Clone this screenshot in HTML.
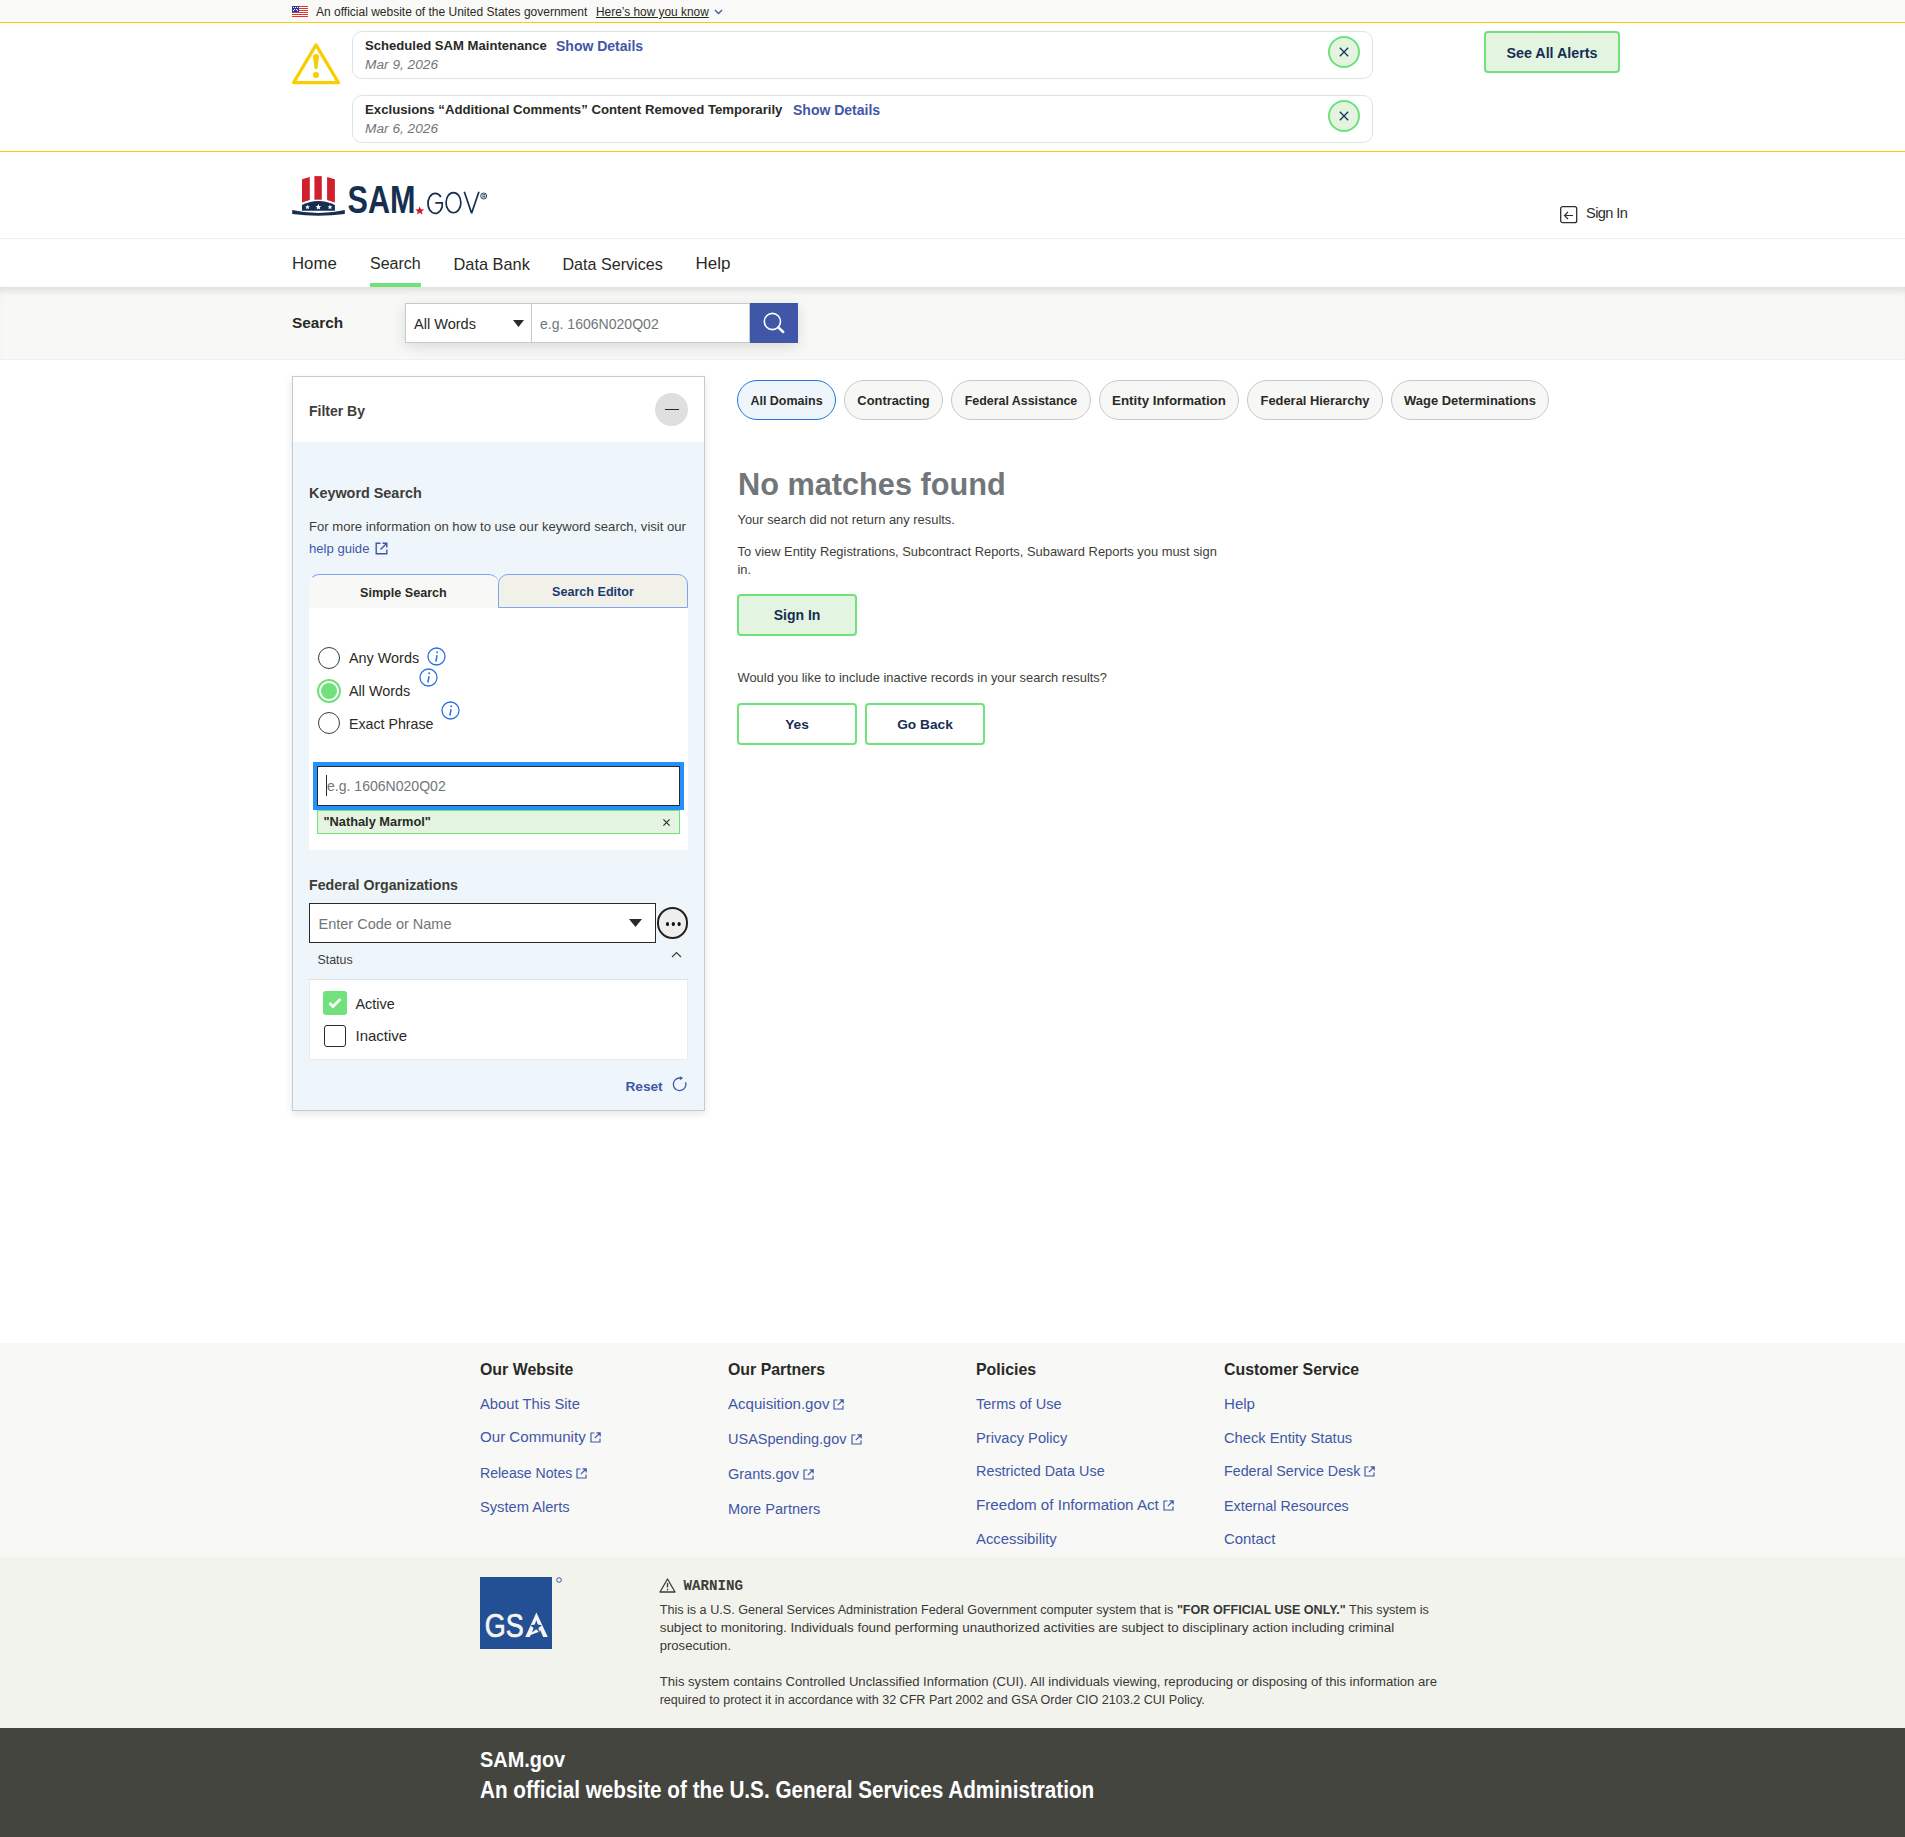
<!DOCTYPE html>
<html><head><meta charset="utf-8">
<style>
*{box-sizing:border-box;margin:0;padding:0}
html,body{width:1905px;height:1837px;overflow:hidden;background:#fff}
body{font-family:"Liberation Sans",sans-serif;color:#2a2a26;position:relative}
.a{position:absolute;white-space:nowrap}
.b{font-weight:700}
</style></head><body>

<!-- gov banner -->
<div class="a" style="left:0;top:0;width:1905px;height:23px;background:#f9f9f7;border-bottom:1px solid #fbcd00"></div>
<svg class="a" style="left:292px;top:6px" width="16" height="11" viewBox="0 0 16 11">
<rect width="16" height="11" fill="#fff"/>
<g fill="#d8382d"><rect y="0" width="16" height="1"/><rect y="2" width="16" height="1"/><rect y="4" width="16" height="1"/><rect y="6" width="16" height="1"/><rect y="8" width="16" height="1"/><rect y="10" width="16" height="1"/></g>
<rect width="7" height="6" fill="#2b3a9e"/>
<g fill="#fff"><rect x="1" y="1" width="1" height="1"/><rect x="3" y="1" width="1" height="1"/><rect x="5" y="1" width="1" height="1"/><rect x="2" y="3" width="1" height="1"/><rect x="4" y="3" width="1" height="1"/><rect x="1" y="4" width="1" height="1"/><rect x="5" y="4" width="1" height="1"/></g>
</svg>
<div class="a" id="t-banner" style="left:316px;top:4px;font-size:12px;line-height:16px;color:#2a2a26">An official website of the United States government</div>
<div class="a" id="t-howknow" style="left:596px;top:4px;font-size:11.9px;line-height:16px;color:#2a2a26;text-decoration:underline">Here’s how you know</div>
<svg class="a" style="left:714px;top:9px" width="9" height="6" viewBox="0 0 9 6"><path d="M1 1 L4.5 4.5 L8 1" fill="none" stroke="#3f57a6" stroke-width="1.3"/></svg>

<!-- alerts -->
<div class="a" style="left:0;top:151px;width:1905px;height:1px;background:#fbcd00"></div>
<svg class="a" style="left:292px;top:41px" width="48" height="44" viewBox="0 0 48 44">
<path d="M24 3.9 L46.4 41.6 L1.6 41.6 Z" fill="none" stroke="#f8ce00" stroke-width="3.2" stroke-linejoin="round"/>
<path d="M21 15.5 Q21 13 24 13 Q27 13 27 15.5 L25.5 27 Q25.3 28.2 24 28.2 Q22.7 28.2 22.5 27 Z" fill="#f8ce00"/>
<circle cx="24" cy="34" r="3.05" fill="#f8ce00"/>
</svg>
<div class="a" style="left:352px;top:31px;width:1021px;height:48px;border:1px solid #dfe1e2;border-radius:10px"></div>
<div class="a b" style="left:365px;top:37px;font-size:13.1px;line-height:18px;color:#2a2a26">Scheduled SAM Maintenance</div>
<div class="a b" style="left:556px;top:37px;font-size:14px;line-height:18px;color:#3f57a6">Show Details</div>
<div class="a" style="left:365px;top:56px;font-size:13.7px;line-height:18px;font-style:italic;color:#71767a">Mar 9, 2026</div>
<div class="a" style="left:1328px;top:36px;width:32px;height:32px;border:2px solid #70e17b;border-radius:50%;background:#e3f5e1"></div>
<svg class="a" style="left:1339px;top:47px" width="10" height="10" viewBox="0 0 10 10"><path d="M0.8 0.8 L9.2 9.2 M9.2 0.8 L0.8 9.2" stroke="#162e51" stroke-width="1.25"/></svg>

<div class="a" style="left:352px;top:95px;width:1021px;height:48px;border:1px solid #dfe1e2;border-radius:10px"></div>
<div class="a b" style="left:365px;top:101px;font-size:13.2px;line-height:18px;color:#2a2a26">Exclusions “Additional Comments” Content Removed Temporarily</div>
<div class="a b" style="left:793px;top:101px;font-size:14px;line-height:18px;color:#3f57a6">Show Details</div>
<div class="a" style="left:365px;top:120px;font-size:13.7px;line-height:18px;font-style:italic;color:#71767a">Mar 6, 2026</div>
<div class="a" style="left:1328px;top:100px;width:32px;height:32px;border:2px solid #70e17b;border-radius:50%;background:#e3f5e1"></div>
<svg class="a" style="left:1339px;top:111px" width="10" height="10" viewBox="0 0 10 10"><path d="M0.8 0.8 L9.2 9.2 M9.2 0.8 L0.8 9.2" stroke="#162e51" stroke-width="1.25"/></svg>

<div class="a b" style="left:1484px;top:31px;width:136px;height:42px;border:2px solid #70e17b;border-radius:4px;background:#e3f5e1;color:#162e51;font-size:14.3px;line-height:38px;padding-top:1px;text-align:center">See All Alerts</div>

<!-- header -->
<svg class="a" style="left:290px;top:174px" width="200" height="44" viewBox="0 0 200 44">
<path d="M12 5.2 L19.8 2.9 L19.8 26 L12 28.6 Z" fill="#d0202e"/>
<path d="M24.4 2.1 L31.8 2.1 L31.8 25.7 L24.4 25.7 Z" fill="#d0202e"/>
<path d="M37.1 2.9 L44.9 5.2 L44.9 28.6 L37.1 26 Z" fill="#d0202e"/>
<path d="M12 30.9 Q28.4 23 44.9 30.9 L44.9 36.7 L12 36.7 Z" fill="#162e51"/>
<g fill="#fff"><path d="M17.5 30.8 l0.68 1.55 1.68 0.15 -1.27 1.1 0.38 1.65 -1.47 -0.88 -1.47 0.88 0.38 -1.65 -1.27 -1.1 1.68 -0.15z"/><path d="M28.4 30.1 l0.82 1.87 2.03 0.18 -1.54 1.33 0.46 2 -1.77 -1.06 -1.77 1.06 0.46 -2 -1.54 -1.33 2.03 -0.18z"/><path d="M40 30.8 l0.68 1.55 1.68 0.15 -1.27 1.1 0.38 1.65 -1.47 -0.88 -1.47 0.88 0.38 -1.65 -1.27 -1.1 1.68 -0.15z"/></g>
<path d="M2.2 36 Q28.5 42.1 54.8 36 L54.8 40 Q28.5 43.5 2.2 40 Z" fill="#162e51"/>
<text x="57.5" y="39" font-family="Liberation Sans" font-weight="700" font-size="38.5" fill="#162e51" textLength="68" lengthAdjust="spacingAndGlyphs">SAM</text>
<path d="M129.7 32.4 l1.32 2.85 3.15 0.22 -2.42 1.98 0.77 3.08 -2.82 -1.76 -2.82 1.76 0.77 -3.08 -2.42 -1.98 3.15 -0.22z" fill="#d0202e"/>
<g fill="none" stroke="#162e51" stroke-width="1.7">
<path d="M150.9 23 A7.3 10 0 1 0 152.2 32.5 L152.2 28.9 L145.3 28.9"/>
<ellipse cx="163.45" cy="28.7" rx="7.4" ry="10.05"/>
<path d="M174.3 17.8 L181.6 39.3 L188.9 17.8" stroke-linejoin="bevel"/>
</g>
<circle cx="193.7" cy="22" r="3" fill="none" stroke="#162e51" stroke-width="0.9"/>
<text x="192.2" y="23.6" font-family="Liberation Sans" font-size="4.5" font-weight="700" fill="#162e51">R</text>
</svg>
<svg class="a" style="left:1560px;top:206px" width="18" height="18" viewBox="0 0 18 18">
<rect x="0.7" y="0.7" width="16" height="16" rx="2" fill="none" stroke="#2e2e2a" stroke-width="1.3"/>
<path d="M13 9.5 L4.5 9.5 M8 6 L4.5 9.5 L8 13" fill="none" stroke="#2e2e2a" stroke-width="1.2"/>
</svg>
<div class="a" style="left:1586px;top:204px;font-size:14.6px;line-height:18px;letter-spacing:-0.6px;color:#2e2e2a">Sign In</div>
<div class="a" style="left:0;top:238px;width:1905px;height:1px;background:#f0f0ec"></div>

<!-- nav -->
<div class="a" style="left:292px;top:254px;font-size:16.8px;line-height:20px;color:#2a2a26">Home</div>
<div class="a" style="left:370px;top:254px;font-size:16px;line-height:20px;color:#2a2a26">Search</div>
<div class="a" style="left:453.5px;top:254px;font-size:16.36px;line-height:20px;color:#2a2a26">Data Bank</div>
<div class="a" style="left:562.5px;top:254px;font-size:16.1px;line-height:20px;color:#2a2a26">Data Services</div>
<div class="a" style="left:695.5px;top:254px;font-size:17px;line-height:20px;color:#2a2a26">Help</div>
<div class="a" style="left:370px;top:283px;width:51px;height:4px;background:#70e17b"></div>

<!-- search band -->
<div class="a" style="left:0;top:287px;width:1905px;height:73px;background:#f8f8f6;box-shadow:inset 0 8px 10px -6px rgba(0,0,0,.14);border-bottom:1px solid #f1f1ea"></div>
<div class="a b" style="left:292px;top:314px;font-size:15.35px;line-height:18px;color:#2a2a26">Search</div>
<div class="a" style="left:405px;top:303px;width:393px;height:40px;box-shadow:0 4px 14px rgba(0,0,0,.12)"></div>
<div class="a" style="left:531px;top:303px;width:219px;height:40px;background:#fff;border:1px solid #c9c9c9;border-left:none"></div>
<div class="a" style="left:405px;top:303px;width:127px;height:40px;background:#fff;border:1px solid #c9c9c9"></div>
<div class="a" style="left:414px;top:315px;font-size:14.55px;line-height:18px;color:#2a2a26">All Words</div>
<svg class="a" style="left:513px;top:320px" width="11" height="8" viewBox="0 0 11 8"><path d="M0 0 L11 0 L5.5 7 Z" fill="#2a2a26"/></svg>
<div class="a" style="left:540px;top:315px;font-size:14.06px;line-height:18px;color:#71767a">e.g. 1606N020Q02</div>
<div class="a" style="left:750px;top:303px;width:48px;height:40px;background:#3f57a6"></div>
<svg class="a" style="left:762px;top:311px" width="24" height="24" viewBox="0 0 24 24"><circle cx="10.4" cy="10.5" r="8.1" fill="none" stroke="#fff" stroke-width="1.6"/><path d="M16.3 16.4 L21.2 21" stroke="#fff" stroke-width="2.5" stroke-linecap="round"/></svg>

<!-- filter panel -->
<div class="a" style="left:292px;top:376px;width:413px;height:735px;border:1px solid #c9c9c9;background:#eff6fb;box-shadow:0 3px 8px rgba(0,0,0,.1)"></div>
<div class="a" style="left:293px;top:377px;width:411px;height:65px;background:#fff"></div>
<div class="a b" style="left:309px;top:402px;font-size:14px;line-height:18px;color:#3d3d38">Filter By</div>
<div class="a" style="left:655px;top:393px;width:33px;height:33px;border-radius:50%;background:#dfdfdf"></div>
<div class="a" style="left:665px;top:408.5px;width:14px;height:1.6px;background:#162e51"></div>

<div class="a b" style="left:309px;top:484px;font-size:14.4px;line-height:18px;color:#3d3d38">Keyword Search</div>
<div class="a" style="left:309px;top:518px;font-size:13.1px;line-height:18px;color:#3d3d38">For more information on how to use our keyword search, visit our</div>
<div class="a" style="left:309px;top:540px;font-size:13.1px;line-height:18px;color:#3f57a6">help guide</div>
<svg class="a" style="left:375px;top:542px" width="13" height="13" viewBox="0 0 13 13"><path d="M5.5 1.2 L1.2 1.2 L1.2 11.8 L11.8 11.8 L11.8 7.5 M7.5 1.2 L11.8 1.2 L11.8 5.5 M11.8 1.2 L5.5 7.5" fill="none" stroke="#3f57a6" stroke-width="1.4"/></svg>

<!-- tabs -->
<div class="a" style="left:309px;top:608px;width:379px;height:242px;background:#fff"></div>
<div class="a" style="left:309px;top:574px;width:190px;height:34px;background:#f8f8f6;border:1px solid #7da6f0;border-bottom:none;border-right:none;border-left-color:transparent;border-radius:10px 10px 0 0"></div>
<div class="a" style="left:498px;top:574px;width:190px;height:34px;background:#f1f1ea;border:1px solid #7da6f0;border-radius:10px 10px 0 0"></div>
<div class="a b" style="left:360px;top:585px;font-size:12.6px;line-height:16px;color:#2a2a26">Simple Search</div>
<div class="a b" style="left:552px;top:584px;font-size:12.6px;line-height:16px;color:#1a3a6e">Search Editor</div>

<!-- radios -->
<div class="a" style="left:318px;top:647px;width:22px;height:22px;border:1.5px solid #3d3d38;border-radius:50%;background:#fff"></div>
<div class="a" style="left:317px;top:679px;width:24px;height:24px;border:2px solid #70e17b;border-radius:50%;background:#fff"></div>
<div class="a" style="left:321px;top:683px;width:16px;height:16px;border-radius:50%;background:#70e17b"></div>
<div class="a" style="left:318px;top:712px;width:22px;height:22px;border:1.5px solid #3d3d38;border-radius:50%;background:#fff"></div>
<div class="a" style="left:349px;top:649px;font-size:14.4px;line-height:18px;color:#2a2a26">Any Words</div>
<div class="a" style="left:349px;top:682px;font-size:14.4px;line-height:18px;color:#2a2a26">All Words</div>
<div class="a" style="left:349px;top:715px;font-size:14.2px;line-height:18px;color:#2a2a26">Exact Phrase</div>
<svg class="a" style="left:427px;top:647px" width="19" height="19" viewBox="0 0 19 19"><circle cx="9.5" cy="9.5" r="8.5" fill="none" stroke="#2672de" stroke-width="1.3"/><path d="M10.1 8.2 L9 14" stroke="#2672de" stroke-width="1.5"/><path d="M8 14 L10 14" stroke="#2672de" stroke-width="0.8"/><circle cx="10.2" cy="5.3" r="0.95" fill="#2672de"/></svg>
<svg class="a" style="left:419px;top:668px" width="19" height="19" viewBox="0 0 19 19"><circle cx="9.5" cy="9.5" r="8.5" fill="none" stroke="#2672de" stroke-width="1.3"/><path d="M10.1 8.2 L9 14" stroke="#2672de" stroke-width="1.5"/><path d="M8 14 L10 14" stroke="#2672de" stroke-width="0.8"/><circle cx="10.2" cy="5.3" r="0.95" fill="#2672de"/></svg>
<svg class="a" style="left:441px;top:701px" width="19" height="19" viewBox="0 0 19 19"><circle cx="9.5" cy="9.5" r="8.5" fill="none" stroke="#2672de" stroke-width="1.3"/><path d="M10.1 8.2 L9 14" stroke="#2672de" stroke-width="1.5"/><path d="M8 14 L10 14" stroke="#2672de" stroke-width="0.8"/><circle cx="10.2" cy="5.3" r="0.95" fill="#2672de"/></svg>

<!-- focused input -->
<div class="a" style="left:313px;top:762px;width:371px;height:48px;background:#2491ff"></div>
<div class="a" style="left:317px;top:766px;width:363px;height:40px;background:#fff;border:1px solid #2a2a26"></div>
<div class="a" style="left:326px;top:775px;width:1px;height:21px;background:#2a2a26"></div>
<div class="a" style="left:327px;top:777px;font-size:14.06px;line-height:18px;color:#71767a">e.g. 1606N020Q02</div>
<div class="a" style="left:317px;top:810px;width:363px;height:24px;background:#e3f5e1;border:1px solid #70e17b"></div>
<div class="a b" style="left:323.5px;top:814px;font-size:12.8px;line-height:16px;color:#2a2a26">"Nathaly Marmol"</div>
<svg class="a" style="left:663.3px;top:819.3px" width="7" height="7" viewBox="0 0 7 7"><path d="M0.4 0.4 L6.6 6.6 M6.6 0.4 L0.4 6.6" stroke="#2a2a26" stroke-width="1.15"/></svg>

<!-- federal orgs -->
<div class="a b" style="left:309px;top:876px;font-size:14.2px;line-height:18px;color:#3d3d38">Federal Organizations</div>
<div class="a" style="left:309px;top:903px;width:347px;height:40px;background:#fff;border:1px solid #2a2a26"></div>
<div class="a" style="left:318.5px;top:915px;font-size:14.5px;line-height:18px;color:#71767a">Enter Code or Name</div>
<svg class="a" style="left:629px;top:919px" width="13" height="8" viewBox="0 0 13 8"><path d="M0 0 L13 0 L6.5 8 Z" fill="#2a2a26"/></svg>
<div class="a" style="left:656.5px;top:907px;width:31.5px;height:31.5px;border:2px solid #222;border-radius:50%;background:#eeeeee"></div>
<div class="a" style="left:665.6px;top:922.3px;width:3.6px;height:3.6px;border-radius:50%;background:#111;box-shadow:5.8px 0 0 #111,11.6px 0 0 #111"></div>
<div class="a" style="left:317.5px;top:952px;font-size:12.4px;line-height:16px;color:#3d3d38">Status</div>
<svg class="a" style="left:671px;top:951px" width="11" height="7" viewBox="0 0 11 7"><path d="M1 6 L5.5 1.5 L10 6" fill="none" stroke="#3d3d38" stroke-width="1.2"/></svg>
<div class="a" style="left:309px;top:979px;width:379px;height:81px;background:#fff;border:1px solid #ebebeb;border-top:1px solid #dfe1e2"></div>
<div class="a" style="left:323px;top:991px;width:24px;height:24px;border-radius:3px;background:#70e17b"></div>
<svg class="a" style="left:327px;top:996px" width="16" height="14" viewBox="0 0 16 14"><path d="M2.5 7 L6 10.5 L13.5 3" fill="none" stroke="#fff" stroke-width="2.8"/></svg>
<div class="a" style="left:324px;top:1025px;width:22px;height:22px;border:1.5px solid #2a2a26;border-radius:3px;background:#fff"></div>
<div class="a" style="left:355.5px;top:995px;font-size:14.4px;line-height:18px;color:#2a2a26">Active</div>
<div class="a" style="left:355.5px;top:1027px;font-size:15px;line-height:18px;color:#2a2a26">Inactive</div>
<div class="a b" style="left:625.4px;top:1078px;font-size:13.7px;line-height:18px;color:#3f57a6">Reset</div>
<svg class="a" style="left:672px;top:1076px" width="16" height="16" viewBox="0 0 16 16"><path d="M8 2 A6.3 6.3 0 1 0 13.6 6.3" fill="none" stroke="#3f57a6" stroke-width="1.3"/><path d="M7.9 0.2 L11.2 2.1 L7.9 4.3 Z" fill="#3f57a6"/></svg>

<!-- domain pills -->
<div class="a b" style="left:737px;top:380px;width:99px;height:40px;border:1px solid #2672de;border-radius:20px;padding-top:1px;background:#eff6fb;font-size:12.5px;line-height:38px;text-align:center;color:#2a2a26">All Domains</div>
<div class="a b" style="left:844px;top:380px;width:99px;height:40px;border:1px solid #c9c9c9;border-radius:20px;padding-top:1px;background:#f7f7f5;font-size:12.9px;line-height:38px;text-align:center;color:#2a2a26">Contracting</div>
<div class="a b" style="left:951px;top:380px;width:140px;height:40px;border:1px solid #c9c9c9;border-radius:20px;padding-top:1px;background:#f7f7f5;font-size:12.4px;line-height:38px;text-align:center;color:#2a2a26">Federal Assistance</div>
<div class="a b" style="left:1099px;top:380px;width:140px;height:40px;border:1px solid #c9c9c9;border-radius:20px;padding-top:1px;background:#f7f7f5;font-size:13.3px;line-height:38px;text-align:center;color:#2a2a26">Entity Information</div>
<div class="a b" style="left:1247px;top:380px;width:136px;height:40px;border:1px solid #c9c9c9;border-radius:20px;padding-top:1px;background:#f7f7f5;font-size:12.9px;line-height:38px;text-align:center;color:#2a2a26">Federal Hierarchy</div>
<div class="a b" style="left:1391px;top:380px;width:158px;height:40px;border:1px solid #c9c9c9;border-radius:20px;padding-top:1px;background:#f7f7f5;font-size:12.95px;line-height:38px;text-align:center;color:#2a2a26">Wage Determinations</div>

<!-- results -->
<div class="a b" style="left:738px;top:467px;font-size:30.7px;line-height:36px;color:#71767a">No matches found</div>
<div class="a" style="left:737.5px;top:511px;font-size:12.9px;line-height:18px;color:#3d3d38">Your search did not return any results.</div>
<div class="a" style="left:737.5px;top:543px;font-size:12.9px;line-height:18px;color:#3d3d38">To view Entity Registrations, Subcontract Reports, Subaward Reports you must sign</div>
<div class="a" style="left:737.5px;top:561px;font-size:12.9px;line-height:18px;color:#3d3d38">in.</div>
<div class="a b" style="left:737px;top:594px;width:120px;height:42px;border:2px solid #70e17b;border-radius:4px;background:#e3f5e1;font-size:14px;line-height:38px;text-align:center;color:#162e51">Sign In</div>
<div class="a" style="left:737.5px;top:669px;font-size:12.9px;line-height:18px;color:#3d3d38">Would you like to include inactive records in your search results?</div>
<div class="a b" style="left:737px;top:703px;width:120px;height:42px;border:2px solid #70e17b;border-radius:4px;background:#fff;font-size:13.7px;line-height:38px;padding-top:1px;text-align:center;color:#162e51">Yes</div>
<div class="a b" style="left:865px;top:703px;width:120px;height:42px;border:2px solid #70e17b;border-radius:4px;background:#fff;font-size:13.7px;line-height:38px;padding-top:1px;text-align:center;color:#162e51">Go Back</div>

<!-- footer -->
<div class="a" style="left:0;top:1343px;width:1905px;height:214px;background:#f8f8f6"></div>
<div class="a" style="left:0;top:1557px;width:1905px;height:171px;background:#f3f3ee"></div>
<div class="a" style="left:0;top:1728px;width:1905px;height:109px;background:#454540"></div>

<div class="a b" style="left:480px;top:1360px;font-size:15.9px;line-height:20px;color:#2a2a26">Our Website</div>
<div class="a b" style="left:728px;top:1360px;font-size:15.9px;line-height:20px;color:#2a2a26">Our Partners</div>
<div class="a b" style="left:976px;top:1360px;font-size:15.9px;line-height:20px;color:#2a2a26">Policies</div>
<div class="a b" style="left:1224px;top:1360px;font-size:15.9px;line-height:20px;color:#2a2a26">Customer Service</div>

<div class="a" style="left:480px;top:1394.9px;font-size:14.77px;line-height:18px;color:#3f57a6">About This Site</div>
<div class="a" style="left:480px;top:1428.4px;font-size:15.1px;line-height:18px;color:#3f57a6">Our Community<svg style="margin-left:4px;vertical-align:-1px" width="11" height="11" viewBox="0 0 11 11"><path d="M4.5 1 L1 1 L1 10 L10 10 L10 6.5 M6.5 0.8 L10.2 0.8 L10.2 4.5 M10 1 L4.8 6.2" fill="none" stroke="#3f57a6" stroke-width="1.15"/></svg></div>
<div class="a" style="left:480px;top:1463.8px;font-size:14.09px;line-height:18px;color:#3f57a6">Release Notes<svg style="margin-left:4px;vertical-align:-1px" width="11" height="11" viewBox="0 0 11 11"><path d="M4.5 1 L1 1 L1 10 L10 10 L10 6.5 M6.5 0.8 L10.2 0.8 L10.2 4.5 M10 1 L4.8 6.2" fill="none" stroke="#3f57a6" stroke-width="1.15"/></svg></div>
<div class="a" style="left:480px;top:1498.4px;font-size:14.66px;line-height:18px;color:#3f57a6">System Alerts</div>
<div class="a" style="left:728px;top:1394.8px;font-size:15.09px;line-height:18px;color:#3f57a6">Acquisition.gov<svg style="margin-left:4px;vertical-align:-1px" width="11" height="11" viewBox="0 0 11 11"><path d="M4.5 1 L1 1 L1 10 L10 10 L10 6.5 M6.5 0.8 L10.2 0.8 L10.2 4.5 M10 1 L4.8 6.2" fill="none" stroke="#3f57a6" stroke-width="1.15"/></svg></div>
<div class="a" style="left:728px;top:1429.7px;font-size:14.5px;line-height:18px;color:#3f57a6">USASpending.gov<svg style="margin-left:4px;vertical-align:-1px" width="11" height="11" viewBox="0 0 11 11"><path d="M4.5 1 L1 1 L1 10 L10 10 L10 6.5 M6.5 0.8 L10.2 0.8 L10.2 4.5 M10 1 L4.8 6.2" fill="none" stroke="#3f57a6" stroke-width="1.15"/></svg></div>
<div class="a" style="left:728px;top:1464.5px;font-size:14.5px;line-height:18px;color:#3f57a6">Grants.gov<svg style="margin-left:4px;vertical-align:-1px" width="11" height="11" viewBox="0 0 11 11"><path d="M4.5 1 L1 1 L1 10 L10 10 L10 6.5 M6.5 0.8 L10.2 0.8 L10.2 4.5 M10 1 L4.8 6.2" fill="none" stroke="#3f57a6" stroke-width="1.15"/></svg></div>
<div class="a" style="left:728px;top:1499.5px;font-size:14.58px;line-height:18px;color:#3f57a6">More Partners</div>
<div class="a" style="left:976px;top:1394.7px;font-size:14.52px;line-height:18px;color:#3f57a6">Terms of Use</div>
<div class="a" style="left:976px;top:1428.8px;font-size:14.67px;line-height:18px;color:#3f57a6">Privacy Policy</div>
<div class="a" style="left:976px;top:1461.5px;font-size:14.39px;line-height:18px;color:#3f57a6">Restricted Data Use</div>
<div class="a" style="left:976px;top:1495.9px;font-size:15.17px;line-height:18px;color:#3f57a6">Freedom of Information Act<svg style="margin-left:4px;vertical-align:-1px" width="11" height="11" viewBox="0 0 11 11"><path d="M4.5 1 L1 1 L1 10 L10 10 L10 6.5 M6.5 0.8 L10.2 0.8 L10.2 4.5 M10 1 L4.8 6.2" fill="none" stroke="#3f57a6" stroke-width="1.15"/></svg></div>
<div class="a" style="left:976px;top:1530.2px;font-size:14.84px;line-height:18px;color:#3f57a6">Accessibility</div>
<div class="a" style="left:1224px;top:1394.5px;font-size:15.07px;line-height:18px;color:#3f57a6">Help</div>
<div class="a" style="left:1224px;top:1428.8px;font-size:14.69px;line-height:18px;color:#3f57a6">Check Entity Status</div>
<div class="a" style="left:1224px;top:1461.6px;font-size:14.28px;line-height:18px;color:#3f57a6">Federal Service Desk<svg style="margin-left:4px;vertical-align:-1px" width="11" height="11" viewBox="0 0 11 11"><path d="M4.5 1 L1 1 L1 10 L10 10 L10 6.5 M6.5 0.8 L10.2 0.8 L10.2 4.5 M10 1 L4.8 6.2" fill="none" stroke="#3f57a6" stroke-width="1.15"/></svg></div>
<div class="a" style="left:1224px;top:1496.8px;font-size:14.31px;line-height:18px;color:#3f57a6">External Resources</div>
<div class="a" style="left:1224px;top:1530.1px;font-size:14.91px;line-height:18px;color:#3f57a6">Contact</div>

<!-- gsa / warning -->
<svg class="a" style="left:480px;top:1577px" width="82" height="72" viewBox="0 0 82 72">
<rect width="72" height="72" fill="#235095"/>
<text x="4.8" y="60" font-family="Liberation Sans" font-weight="400" font-size="33.5" fill="#f5f5f0" stroke="#f5f5f0" stroke-width="0.7" textLength="39" lengthAdjust="spacingAndGlyphs">GS</text>
<path d="M56.4 35.5 L67.8 60 L63.2 60 L56.4 44.5 L49.8 60 L45.3 60 Z" fill="#f5f5f0"/>
<path d="M51.5 48 L61.5 48 L62.5 51 L58.5 55 L45.3 60 L50.5 53 Z" fill="#f5f5f0"/>
<path d="M56.3 43 L57.6 47.6 L62 48.3 L58.4 51 L59.4 55.3 L56.2 52.3 L52 55.6 L53.6 51 L50.3 48.2 L55 47.6 Z" fill="#235095"/>
<circle cx="79" cy="3" r="2.3" fill="none" stroke="#235095" stroke-width="0.9"/>
</svg>
<svg class="a" style="left:659px;top:1578px" width="17" height="15" viewBox="0 0 17 15"><path d="M8.5 1 L16 14 L1 14 Z" fill="none" stroke="#3d3d38" stroke-width="1.3" stroke-linejoin="round"/><path d="M8.5 5 L8.5 9.5" stroke="#3d3d38" stroke-width="1.4"/><circle cx="8.5" cy="11.6" r="0.8" fill="#3d3d38"/></svg>
<div class="a b" style="left:683.4px;top:1578px;font-family:'Liberation Mono',monospace;font-size:14.2px;line-height:16px;color:#3d3d38;letter-spacing:0px">WARNING</div>
<div class="a" style="left:659.7px;top:1601px;font-size:12.62px;line-height:18px;color:#383834">This is a U.S. General Services Administration Federal Government computer system that is <b>"FOR OFFICIAL USE ONLY."</b> This system is</div>
<div class="a" style="left:659.7px;top:1619px;font-size:13.38px;line-height:18px;color:#383834">subject to monitoring. Individuals found performing unauthorized activities are subject to disciplinary action including criminal</div>
<div class="a" style="left:659.7px;top:1637px;font-size:13.1px;line-height:18px;color:#383834">prosecution.</div>
<div class="a" style="left:659.7px;top:1673px;font-size:13.1px;line-height:18px;color:#383834">This system contains Controlled Unclassified Information (CUI). All individuals viewing, reproducing or disposing of this information are</div>
<div class="a" style="left:659.7px;top:1691px;font-size:12.56px;line-height:18px;color:#383834">required to protect it in accordance with 32 CFR Part 2002 and GSA Order CIO 2103.2 CUI Policy.</div>

<div class="a b" style="left:480px;top:1748px;font-size:19.9px;line-height:24px;color:#fff;transform:scaleY(1.13);transform-origin:0 18px">SAM.gov</div>
<div class="a b" style="left:480px;top:1778px;font-size:20.7px;line-height:26px;color:#fff;transform:scaleY(1.12);transform-origin:0 20px">An official website of the U.S. General Services Administration</div>

</body></html>
